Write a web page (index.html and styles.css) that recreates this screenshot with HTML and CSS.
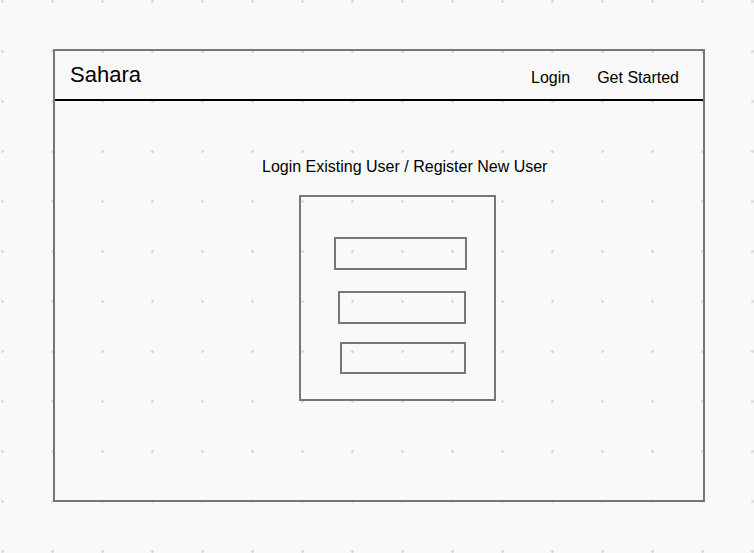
FILE: index.html
```html
<!DOCTYPE html>
<html>
	<head>
		<meta charset="utf-8" />
		<title>Sahara</title>
		<link rel="stylesheet" href="styles.css">
	</head>
	<body>
		<div id="frame">
			<div id="top">
				<div class="brand">Sahara</div>
				<div class="nav">
					<a href="#">Login</a>
					<a href="#">Get Started</a>
				</div>
			</div>
			<div id="main">
				<div class="title">Login Existing User / Register New User</div>
				<form class="box" onsubmit="return false">
					<input type="text" class="field f1" name="username"/>
					<input type="password" class="field f2" name="password"/>
					<input type="submit" class="field f3" value=""/>
				</form>
			</div>
		</div>
	</body>
</html>
```

FILE: styles.css
```css
*{margin:0;padding:0;box-sizing:border-box}
body{font-family:"Liberation Sans",Arial,sans-serif;color:#000;background-color:#f9f9f9;
	 background-image:radial-gradient(circle at 2.5px 1.5px,#d9d9d9 1.1px,transparent 1.6px);
	 background-size:50px 50px;width:754px;height:553px;overflow:hidden;}
a{text-decoration:none;color:#000;}
input{outline:none;}
#frame{width:652px;height:453px;margin:49px 0 0 53px;border:2px solid #777;}
#top{height:50px;border-bottom:2px solid #000;display:flex;justify-content:space-between;
	 align-items:flex-start;padding:0 24px 0 15px;}
.brand{font-size:22px;line-height:25px;margin-top:11px;}
.nav{display:flex;gap:27px;font-size:16px;line-height:18px;margin-top:18px;}
#main{display:flex;flex-direction:column;align-items:flex-start;padding-top:57px;}
.title{font-size:16px;line-height:18px;margin-left:207px;}
.box{width:197px;height:206px;margin:19px 0 0 244px;border:2px solid #777;
	 display:flex;flex-direction:column;align-items:flex-start;padding-top:40px;}
.field{border:2px solid #777;background:transparent;display:block;}
.f1{width:133px;height:33px;margin-left:33px;}
.f2{width:128px;height:33px;margin:21px 0 0 37px;}
.f3{width:126px;height:32px;margin:18px 0 0 39px;}
```
